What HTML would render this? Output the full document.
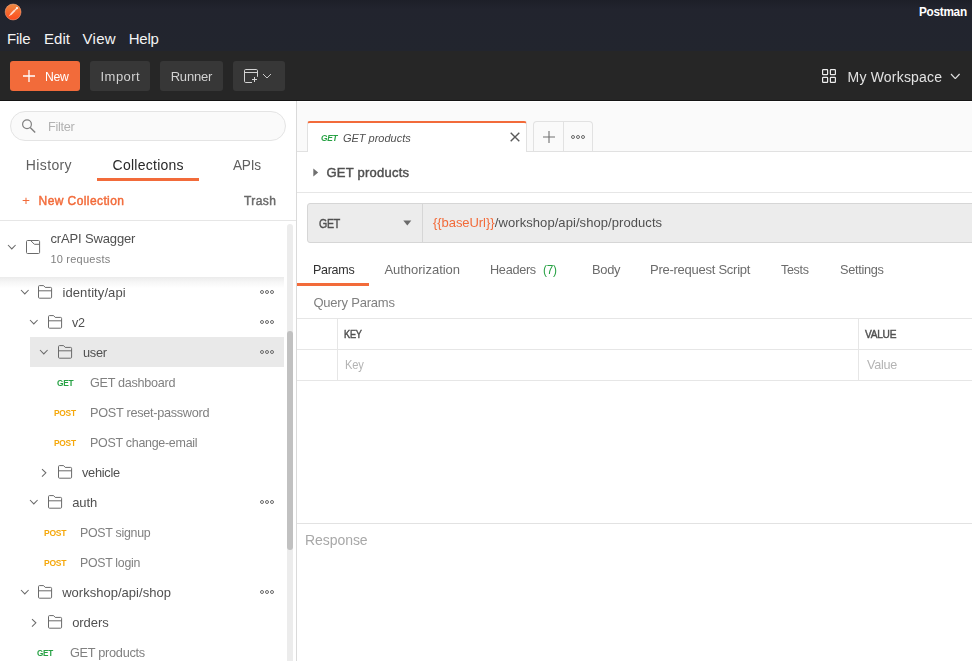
<!DOCTYPE html>
<html>
<head>
<meta charset="utf-8">
<title>Postman</title>
<style>
*{box-sizing:border-box;margin:0;padding:0}
html,body{width:972px;height:661px;overflow:hidden;background:#fff}
body{font-family:"Liberation Sans",sans-serif;font-size:13px;color:#505050;position:relative}
.abs{position:absolute}
.t{position:absolute;white-space:nowrap;line-height:1}
#titlebar{left:0;top:0;width:972px;height:51px;background:linear-gradient(#1d1f28 0,#22242e 9px,#22252e 100%)}
#toolbar{left:0;top:51px;width:972px;height:50px;background:#262626;border-bottom:1px solid #141414}
.btn{position:absolute;top:61px;height:30px;border-radius:3px;background:#373737}
#sidebar{left:0;top:101px;width:297px;height:560px;background:#fff;border-right:1px solid #dadada}
#main{left:297px;top:101px;width:675px;height:560px;background:#fff}
.hl{position:absolute;background:#e9e9e9}
</style>
</head>
<body>
<div id="titlebar" class="abs">
  <svg class="abs" style="left:4px;top:3px" width="18" height="18" viewBox="0 0 18 18">
    <defs><linearGradient id="lg" x1="0" y1="0" x2="0" y2="1"><stop offset="0" stop-color="#ee8a42"/><stop offset="1" stop-color="#ff4a1c"/></linearGradient></defs>
    <circle cx="9.1" cy="9" r="8.6" fill="#14151d"/>
    <circle cx="9.1" cy="9" r="8" fill="url(#lg)" stroke="#f7b79a" stroke-width=".5"/>
    <path d="M4.6 13.5 L6.9 10 L10.3 6.5 L11.6 7.8 L8.1 11.2 Z" fill="#fff" opacity=".78"/>
    <path d="M11 7.1 L12.6 5.5" stroke="#fff" stroke-width="1.2" opacity=".8"/>
    <circle cx="13" cy="5.1" r="1.15" fill="#fff" opacity=".9"/>
  </svg>
</div>
<div id="toolbar" class="abs"></div>
<div class="btn" style="left:10px;width:70px;background:#f26b3a"></div>
<div class="btn" style="left:90px;width:60px"></div>
<div class="btn" style="left:160px;width:63px"></div>
<div class="btn" style="left:233px;width:52px"></div>
<!-- plus in New -->
<svg class="abs" style="left:23px;top:70px" width="12" height="12" viewBox="0 0 12 12"><path d="M6 0 V12 M0 6 H12" stroke="#fff" stroke-width="1.3" fill="none"/></svg>
<!-- new window icon -->
<svg class="abs" style="left:243px;top:68px" width="16" height="16" viewBox="0 0 16 16">
  <path d="M9 14.5 H2.7 Q1.5 14.5 1.5 13.3 V2.7 Q1.5 1.5 2.7 1.5 H13.3 Q14.5 1.5 14.5 2.7 V8.8 M1.5 4.5 H14.5" fill="none" stroke="#d4d4d4" stroke-width="1"/>
  <path d="M11.5 9 V14 M9 11.5 H14" fill="none" stroke="#d4d4d4" stroke-width="1"/>
</svg>
<svg class="abs" style="left:262.0px;top:73.0px" width="10.0" height="6.0" viewBox="-1 -1 10.0 6.0"><path d="M0 0 L4.00 4.00 L8.00 0" fill="none" stroke="#c8c8c8" stroke-width="1"/></svg>
<!-- workspace grid -->
<svg class="abs" style="left:822px;top:69px" width="15" height="15" viewBox="0 0 15 15">
  <g fill="none" stroke="#ececec" stroke-width="1.2"><rect x=".6" y=".6" width="5" height="5" rx=".6"/><rect x="8.4" y=".6" width="5" height="5" rx=".6"/><rect x=".6" y="8.4" width="5" height="5" rx=".6"/><rect x="8.4" y="8.4" width="5" height="5" rx=".6"/></g>
</svg>
<svg class="abs" style="left:950.0px;top:72.9px" width="10.6" height="6.6" viewBox="-1 -1 10.6 6.6"><path d="M0 0 L4.30 4.60 L8.60 0" fill="none" stroke="#e0e0e0" stroke-width="1.2"/></svg>

<div id="sidebar" class="abs"></div>
<div id="main" class="abs"></div>

<!-- filter box -->
<div class="abs" style="left:10px;top:111px;width:276px;height:30px;border:1px solid #e4e4e4;border-radius:15px;background:#fafafa"></div>
<svg class="abs" style="left:21px;top:118px" width="16" height="16" viewBox="0 0 16 16"><circle cx="6" cy="6.2" r="4.4" fill="none" stroke="#808080" stroke-width="1.2"/><path d="M9.2 9.4 L14.2 14.4" stroke="#808080" stroke-width="1.4" fill="none"/></svg>
<!-- collections underline -->
<div class="abs" style="left:97px;top:178px;width:102px;height:3px;background:#f26b3a"></div>
<!-- line below new collection -->
<div class="abs" style="left:0;top:220px;width:296px;height:1px;background:#e6e6e6"></div>
<!-- scrollbar -->
<div class="abs" style="left:287px;top:224px;width:6px;height:440px;border-radius:3px;background:#ececec"></div>
<div class="abs" style="left:287px;top:331px;width:6px;height:219px;border-radius:3px;background:#c1c1c1"></div>
<!-- collection header shadow -->
<div class="abs" style="left:0;top:277px;width:284px;height:11px;background:linear-gradient(#ebebeb,#f6f6f6 45%,#ffffff)"></div>
<!-- user highlight -->
<div class="hl" style="left:30px;top:337px;width:254px;height:30px"></div>
<!-- collection icon -->
<svg class="abs" style="left:25.9px;top:239.8px" width="15" height="15" viewBox="0 0 15 15"><path d="M1.6 .5 H12.5 Q13.6 .5 13.6 1.6 V12.4 Q13.6 13.5 12.5 13.5 H1.6 Q.5 13.5 .5 12.4 V1.6 Q.5 .5 1.6 .5 Z M4.6 .5 L8.4 4.3 H13.6" fill="none" stroke="#6a6a6a" stroke-width="1"/></svg>
<svg class="abs" style="left:7.2px;top:244.1px" width="9.6" height="5.9" viewBox="-1 -1 9.6 5.9"><path d="M0 0 L3.80 3.90 L7.60 0" fill="none" stroke="#6a6a6a" stroke-width="1.05"/></svg>
<svg class="abs" style="left:19.5px;top:289.1px" width="9.6" height="5.9" viewBox="-1 -1 9.6 5.9"><path d="M0 0 L3.80 3.90 L7.60 0" fill="none" stroke="#6a6a6a" stroke-width="1.05"/></svg>
<svg class="abs" style="left:37.7px;top:285.0px" width="15" height="14" viewBox="0 0 15 14"><path d="M1.5 .6 H5.6 L7.2 2.4 H12.6 Q13.6 2.4 13.6 3.4 V12.2 Q13.6 13.2 12.6 13.2 H1.5 Q.5 13.2 .5 12.2 V1.6 Q.5 .6 1.5 .6 Z M.5 5.8 H13.6" fill="none" stroke="#6a6a6a" stroke-width="1"/></svg>
<svg class="abs" style="left:259px;top:289px" width="16" height="6" viewBox="0 0 16 6"><g fill="none" stroke="#6a6a6a" stroke-width="1"><circle cx="3" cy="3" r="1.5"/><circle cx="8" cy="3" r="1.5"/><circle cx="13" cy="3" r="1.5"/></g></svg>
<svg class="abs" style="left:29.2px;top:319.1px" width="9.6" height="5.9" viewBox="-1 -1 9.6 5.9"><path d="M0 0 L3.80 3.90 L7.60 0" fill="none" stroke="#6a6a6a" stroke-width="1.05"/></svg>
<svg class="abs" style="left:47.5px;top:315.0px" width="15" height="14" viewBox="0 0 15 14"><path d="M1.5 .6 H5.6 L7.2 2.4 H12.6 Q13.6 2.4 13.6 3.4 V12.2 Q13.6 13.2 12.6 13.2 H1.5 Q.5 13.2 .5 12.2 V1.6 Q.5 .6 1.5 .6 Z M.5 5.8 H13.6" fill="none" stroke="#6a6a6a" stroke-width="1"/></svg>
<svg class="abs" style="left:259px;top:319px" width="16" height="6" viewBox="0 0 16 6"><g fill="none" stroke="#6a6a6a" stroke-width="1"><circle cx="3" cy="3" r="1.5"/><circle cx="8" cy="3" r="1.5"/><circle cx="13" cy="3" r="1.5"/></g></svg>
<svg class="abs" style="left:39.2px;top:349.1px" width="9.6" height="5.9" viewBox="-1 -1 9.6 5.9"><path d="M0 0 L3.80 3.90 L7.60 0" fill="none" stroke="#6a6a6a" stroke-width="1.05"/></svg>
<svg class="abs" style="left:57.5px;top:345.0px" width="15" height="14" viewBox="0 0 15 14"><path d="M1.5 .6 H5.6 L7.2 2.4 H12.6 Q13.6 2.4 13.6 3.4 V12.2 Q13.6 13.2 12.6 13.2 H1.5 Q.5 13.2 .5 12.2 V1.6 Q.5 .6 1.5 .6 Z M.5 5.8 H13.6" fill="none" stroke="#6a6a6a" stroke-width="1"/></svg>
<svg class="abs" style="left:259px;top:349px" width="16" height="6" viewBox="0 0 16 6"><g fill="none" stroke="#6a6a6a" stroke-width="1"><circle cx="3" cy="3" r="1.5"/><circle cx="8" cy="3" r="1.5"/><circle cx="13" cy="3" r="1.5"/></g></svg>
<svg class="abs" style="left:41.1px;top:467.5px" width="5.9" height="9.6" viewBox="-1 -1 5.9 9.6"><path d="M0 0 L3.90 3.80 L0 7.60" fill="none" stroke="#6a6a6a" stroke-width="1.05"/></svg>
<svg class="abs" style="left:57.5px;top:465.0px" width="15" height="14" viewBox="0 0 15 14"><path d="M1.5 .6 H5.6 L7.2 2.4 H12.6 Q13.6 2.4 13.6 3.4 V12.2 Q13.6 13.2 12.6 13.2 H1.5 Q.5 13.2 .5 12.2 V1.6 Q.5 .6 1.5 .6 Z M.5 5.8 H13.6" fill="none" stroke="#6a6a6a" stroke-width="1"/></svg>
<svg class="abs" style="left:29.2px;top:499.1px" width="9.6" height="5.9" viewBox="-1 -1 9.6 5.9"><path d="M0 0 L3.80 3.90 L7.60 0" fill="none" stroke="#6a6a6a" stroke-width="1.05"/></svg>
<svg class="abs" style="left:47.5px;top:495.0px" width="15" height="14" viewBox="0 0 15 14"><path d="M1.5 .6 H5.6 L7.2 2.4 H12.6 Q13.6 2.4 13.6 3.4 V12.2 Q13.6 13.2 12.6 13.2 H1.5 Q.5 13.2 .5 12.2 V1.6 Q.5 .6 1.5 .6 Z M.5 5.8 H13.6" fill="none" stroke="#6a6a6a" stroke-width="1"/></svg>
<svg class="abs" style="left:259px;top:499px" width="16" height="6" viewBox="0 0 16 6"><g fill="none" stroke="#6a6a6a" stroke-width="1"><circle cx="3" cy="3" r="1.5"/><circle cx="8" cy="3" r="1.5"/><circle cx="13" cy="3" r="1.5"/></g></svg>
<svg class="abs" style="left:19.5px;top:589.0px" width="9.6" height="5.9" viewBox="-1 -1 9.6 5.9"><path d="M0 0 L3.80 3.90 L7.60 0" fill="none" stroke="#6a6a6a" stroke-width="1.05"/></svg>
<svg class="abs" style="left:37.7px;top:585.0px" width="15" height="14" viewBox="0 0 15 14"><path d="M1.5 .6 H5.6 L7.2 2.4 H12.6 Q13.6 2.4 13.6 3.4 V12.2 Q13.6 13.2 12.6 13.2 H1.5 Q.5 13.2 .5 12.2 V1.6 Q.5 .6 1.5 .6 Z M.5 5.8 H13.6" fill="none" stroke="#6a6a6a" stroke-width="1"/></svg>
<svg class="abs" style="left:259px;top:589px" width="16" height="6" viewBox="0 0 16 6"><g fill="none" stroke="#6a6a6a" stroke-width="1"><circle cx="3" cy="3" r="1.5"/><circle cx="8" cy="3" r="1.5"/><circle cx="13" cy="3" r="1.5"/></g></svg>
<svg class="abs" style="left:31.1px;top:617.5px" width="5.9" height="9.6" viewBox="-1 -1 5.9 9.6"><path d="M0 0 L3.90 3.80 L0 7.60" fill="none" stroke="#6a6a6a" stroke-width="1.05"/></svg>
<svg class="abs" style="left:47.5px;top:615.0px" width="15" height="14" viewBox="0 0 15 14"><path d="M1.5 .6 H5.6 L7.2 2.4 H12.6 Q13.6 2.4 13.6 3.4 V12.2 Q13.6 13.2 12.6 13.2 H1.5 Q.5 13.2 .5 12.2 V1.6 Q.5 .6 1.5 .6 Z M.5 5.8 H13.6" fill="none" stroke="#6a6a6a" stroke-width="1"/></svg>

<!-- main: tab bar -->
<div class="abs" style="left:297px;top:102px;width:675px;height:50px;background:#fafafa;border-bottom:1px solid #e1e1e1"></div>
<div class="abs" style="left:307px;top:121px;width:220px;height:31px;background:#fff;border-left:1px solid #e1e1e1;border-right:1px solid #e1e1e1;border-top:2px solid #f26b3a;border-radius:3px 3px 0 0"></div>
<div class="abs" style="left:533px;top:121px;width:60px;height:30px;border:1px solid #e2e2e2;border-bottom:none;border-radius:4px 4px 0 0;background:#fafafa"></div>
<div class="abs" style="left:563px;top:122px;width:1px;height:29px;background:#e2e2e2"></div>
<!-- tab close -->
<svg class="abs" style="left:510px;top:132px" width="10" height="10" viewBox="0 0 10 10"><path d="M.7 .7 L9.3 9.3 M9.3 .7 L.7 9.3" stroke="#5a5a5a" stroke-width="1.4" fill="none"/></svg>
<!-- tab plus -->
<svg class="abs" style="left:543px;top:131px" width="12" height="12" viewBox="0 0 12 12"><path d="M6 0 V12 M0 6 H12" stroke="#707070" stroke-width="1.1" fill="none"/></svg>
<!-- tab dots -->
<svg class="abs" style="left:570px;top:134px" width="16" height="6" viewBox="0 0 16 6"><g fill="none" stroke="#6a6a6a" stroke-width="1"><circle cx="3" cy="3" r="1.5"/><circle cx="8" cy="3" r="1.5"/><circle cx="13" cy="3" r="1.5"/></g></svg>
<!-- name row triangle -->
<svg class="abs" style="left:313px;top:168px" width="6" height="9" viewBox="0 0 6 9"><path d="M.3 .4 L5.2 4.4 L.3 8.4 Z" fill="#707070"/></svg>
<div class="abs" style="left:297px;top:192px;width:675px;height:1px;background:#e6e6e6"></div>
<!-- url bar -->
<div class="abs" style="left:307px;top:203px;width:680px;height:40px;background:#ececec;border:1px solid #d6d6d6;border-radius:3px"></div>
<div class="abs" style="left:422px;top:204px;width:1px;height:38px;background:#d6d6d6"></div>
<svg class="abs" style="left:403px;top:220.4px" width="9" height="6" viewBox="0 0 9 6"><path d="M.3 .5 H8.3 L4.3 5.4 Z" fill="#6a6a6a"/></svg>
<!-- params underline -->
<div class="abs" style="left:297px;top:283px;width:72px;height:3px;background:#f26b3a"></div>
<!-- table -->
<div class="abs" style="left:297px;top:318px;width:675px;height:1px;background:#e6e6e6"></div>
<div class="abs" style="left:297px;top:349px;width:675px;height:1px;background:#e6e6e6"></div>
<div class="abs" style="left:297px;top:380px;width:675px;height:1px;background:#e6e6e6"></div>
<div class="abs" style="left:337px;top:318px;width:1px;height:63px;background:#e6e6e6"></div>
<div class="abs" style="left:858px;top:318px;width:1px;height:63px;background:#e6e6e6"></div>
<!-- response -->
<div class="abs" style="left:297px;top:523px;width:675px;height:1px;background:#e2e2e2"></div>

<span class="t" style="left:7.0px;top:31.2px;font-size:15px;color:#f4f4f4;letter-spacing:-0.22px">File</span>
<span class="t" style="left:43.9px;top:31.2px;font-size:15px;color:#f4f4f4;letter-spacing:0.08px">Edit</span>
<span class="t" style="left:82.4px;top:31.2px;font-size:15px;color:#f4f4f4;letter-spacing:0.35px">View</span>
<span class="t" style="left:128.7px;top:31.2px;font-size:15px;color:#f4f4f4;letter-spacing:-0.19px">Help</span>
<span class="t" style="left:918.5px;top:5.7px;font-size:12.5px;color:#ffffff;letter-spacing:-0.30px;transform:scaleX(0.943);transform-origin:0 0;font-weight:bold">Postman</span>
<div id="gl" class="abs" style="left:0;top:0;width:972px;height:661px;will-change:transform">
<span class="t" style="left:44.8px;top:69.8px;font-size:13px;color:#ffffff;letter-spacing:-0.30px;transform:scaleX(0.940);transform-origin:0 0">New</span>
<span class="t" style="left:100.5px;top:69.8px;font-size:13px;color:#d2d2d2;letter-spacing:0.47px">Import</span>
<span class="t" style="left:170.7px;top:69.8px;font-size:13px;color:#d2d2d2;letter-spacing:-0.21px">Runner</span>
<span class="t" style="left:847.6px;top:69.6px;font-size:14px;color:#e2e2e2;letter-spacing:0.19px">My Workspace</span>
<span class="t" style="left:47.8px;top:120.2px;font-size:13px;color:#b2b2b2;letter-spacing:-0.30px;transform:scaleX(0.978);transform-origin:0 0">Filter</span>
<span class="t" style="left:25.8px;top:158.1px;font-size:14px;color:#606060;letter-spacing:0.37px">History</span>
<span class="t" style="left:112.6px;top:158.1px;font-size:14px;color:#282828;letter-spacing:0.25px">Collections</span>
<span class="t" style="left:233.0px;top:158.1px;font-size:14px;color:#606060;letter-spacing:-0.30px;transform:scaleX(0.976);transform-origin:0 0">APIs</span>
<span class="t" style="left:22.0px;top:194.0px;font-size:13px;color:#f26b3a;letter-spacing:0.00px;transform:scaleX(1.053);transform-origin:0 0">+</span>
<span class="t" style="left:38.6px;top:194.8px;font-size:12px;color:#f26b3a;letter-spacing:0.41px;-webkit-text-stroke:0.45px #f26b3a">New Collection</span>
<span class="t" style="left:244.0px;top:194.8px;font-size:12px;color:#6a6a6a;letter-spacing:0.44px;-webkit-text-stroke:0.45px #6a6a6a">Trash</span>
<span class="t" style="left:50.4px;top:232.0px;font-size:13px;color:#505050;letter-spacing:-0.14px">crAPI Swagger</span>
<span class="t" style="left:50.4px;top:253.9px;font-size:11px;color:#808080;letter-spacing:0.23px">10 requests</span>
<span class="t" style="left:62.5px;top:285.5px;font-size:13px;color:#505050;letter-spacing:0.09px">identity/api</span>
<span class="t" style="left:72.3px;top:315.5px;font-size:13px;color:#505050;letter-spacing:-0.30px;transform:scaleX(0.968);transform-origin:0 0">v2</span>
<span class="t" style="left:82.7px;top:345.5px;font-size:13px;color:#505050;letter-spacing:-0.30px;transform:scaleX(0.984);transform-origin:0 0">user</span>
<span class="t" style="left:56.7px;top:378.8px;font-size:9px;color:#26a143;letter-spacing:-0.30px;transform:scaleX(0.927);transform-origin:0 0;font-weight:bold">GET</span>
<span class="t" style="left:89.8px;top:375.5px;font-size:13px;color:#808080;letter-spacing:-0.30px;transform:scaleX(0.972);transform-origin:0 0">GET dashboard</span>
<span class="t" style="left:54.0px;top:408.8px;font-size:9px;color:#f5a80c;letter-spacing:-0.30px;transform:scaleX(0.932);transform-origin:0 0;font-weight:bold">POST</span>
<span class="t" style="left:89.8px;top:405.5px;font-size:13px;color:#808080;letter-spacing:-0.30px;transform:scaleX(0.978);transform-origin:0 0">POST reset-password</span>
<span class="t" style="left:54.0px;top:438.8px;font-size:9px;color:#f5a80c;letter-spacing:-0.30px;transform:scaleX(0.932);transform-origin:0 0;font-weight:bold">POST</span>
<span class="t" style="left:89.8px;top:435.5px;font-size:13px;color:#808080;letter-spacing:-0.30px;transform:scaleX(0.960);transform-origin:0 0">POST change-email</span>
<span class="t" style="left:82.3px;top:465.5px;font-size:13px;color:#505050;letter-spacing:-0.30px;transform:scaleX(0.985);transform-origin:0 0">vehicle</span>
<span class="t" style="left:72.2px;top:495.5px;font-size:13px;color:#505050;letter-spacing:-0.07px">auth</span>
<span class="t" style="left:43.8px;top:528.8px;font-size:9px;color:#f5a80c;letter-spacing:-0.30px;transform:scaleX(0.949);transform-origin:0 0;font-weight:bold">POST</span>
<span class="t" style="left:79.5px;top:525.5px;font-size:13px;color:#808080;letter-spacing:-0.30px;transform:scaleX(0.954);transform-origin:0 0">POST signup</span>
<span class="t" style="left:43.8px;top:558.8px;font-size:9px;color:#f5a80c;letter-spacing:-0.30px;transform:scaleX(0.949);transform-origin:0 0;font-weight:bold">POST</span>
<span class="t" style="left:79.5px;top:555.5px;font-size:13px;color:#808080;letter-spacing:-0.30px;transform:scaleX(0.949);transform-origin:0 0">POST login</span>
<span class="t" style="left:62.2px;top:585.5px;font-size:13px;color:#505050;letter-spacing:0.02px">workshop/api/shop</span>
<span class="t" style="left:72.2px;top:615.5px;font-size:13px;color:#505050;letter-spacing:-0.07px">orders</span>
<span class="t" style="left:36.8px;top:648.8px;font-size:9px;color:#26a143;letter-spacing:-0.30px;transform:scaleX(0.904);transform-origin:0 0;font-weight:bold">GET</span>
<span class="t" style="left:69.7px;top:645.5px;font-size:13px;color:#808080;letter-spacing:-0.30px;transform:scaleX(0.980);transform-origin:0 0">GET products</span>
<span class="t" style="left:320.8px;top:133.6px;font-size:9px;color:#26a143;letter-spacing:-0.30px;transform:scaleX(0.921);transform-origin:0 0;font-weight:bold;font-style:italic">GET</span>
<span class="t" style="left:342.9px;top:132.5px;font-size:11px;color:#505050;letter-spacing:0.00px;font-style:italic">GET products</span>
<span class="t" style="left:326.5px;top:165.7px;font-size:13px;color:#505050;letter-spacing:0.23px;-webkit-text-stroke:0.45px #505050">GET products</span>
<span class="t" style="left:318.5px;top:217.0px;font-size:13px;color:#505050;letter-spacing:-0.30px;transform:scaleX(0.815);transform-origin:0 0;-webkit-text-stroke:0.45px #505050">GET</span>
<span class="t" style="left:433.0px;top:216.0px;font-size:13px;color:#f26b3a;letter-spacing:-0.06px">{{baseUrl}}</span>
<span class="t" style="left:494.8px;top:216.0px;font-size:13px;color:#505050;letter-spacing:0.07px">/workshop/api/shop/products</span>
<span class="t" style="left:312.7px;top:262.8px;font-size:13px;color:#303030;letter-spacing:-0.30px;transform:scaleX(0.963);transform-origin:0 0">Params</span>
<span class="t" style="left:384.4px;top:262.8px;font-size:13px;color:#6c6c6c;letter-spacing:-0.02px">Authorization</span>
<span class="t" style="left:490.4px;top:262.8px;font-size:13px;color:#6c6c6c;letter-spacing:-0.30px;transform:scaleX(0.976);transform-origin:0 0">Headers</span>
<span class="t" style="left:542.5px;top:262.8px;font-size:13px;color:#26a143;letter-spacing:-0.30px;transform:scaleX(0.916);transform-origin:0 0">(7)</span>
<span class="t" style="left:591.5px;top:262.8px;font-size:13px;color:#6c6c6c;letter-spacing:-0.30px;transform:scaleX(0.992);transform-origin:0 0">Body</span>
<span class="t" style="left:650.0px;top:262.8px;font-size:13px;color:#6c6c6c;letter-spacing:-0.26px">Pre-request Script</span>
<span class="t" style="left:781.0px;top:262.8px;font-size:13px;color:#6c6c6c;letter-spacing:-0.30px;transform:scaleX(0.961);transform-origin:0 0">Tests</span>
<span class="t" style="left:839.7px;top:262.8px;font-size:13px;color:#6c6c6c;letter-spacing:-0.30px;transform:scaleX(0.980);transform-origin:0 0">Settings</span>
<span class="t" style="left:313.4px;top:296.3px;font-size:13px;color:#808080;letter-spacing:-0.20px">Query Params</span>
<span class="t" style="left:343.5px;top:329.0px;font-size:11px;color:#505050;letter-spacing:-0.30px;transform:scaleX(0.836);transform-origin:0 0;-webkit-text-stroke:0.45px #505050">KEY</span>
<span class="t" style="left:865.0px;top:329.0px;font-size:11px;color:#505050;letter-spacing:-0.30px;transform:scaleX(0.922);transform-origin:0 0;-webkit-text-stroke:0.45px #505050">VALUE</span>
<span class="t" style="left:345.3px;top:358.2px;font-size:13px;color:#b4b4b4;letter-spacing:-0.30px;transform:scaleX(0.858);transform-origin:0 0">Key</span>
<span class="t" style="left:866.5px;top:358.2px;font-size:13px;color:#b4b4b4;letter-spacing:-0.30px;transform:scaleX(0.971);transform-origin:0 0">Value</span>
<span class="t" style="left:305.0px;top:532.9px;font-size:14px;color:#a8a8a8;letter-spacing:-0.06px">Response</span>
</div>
</body>
</html>
